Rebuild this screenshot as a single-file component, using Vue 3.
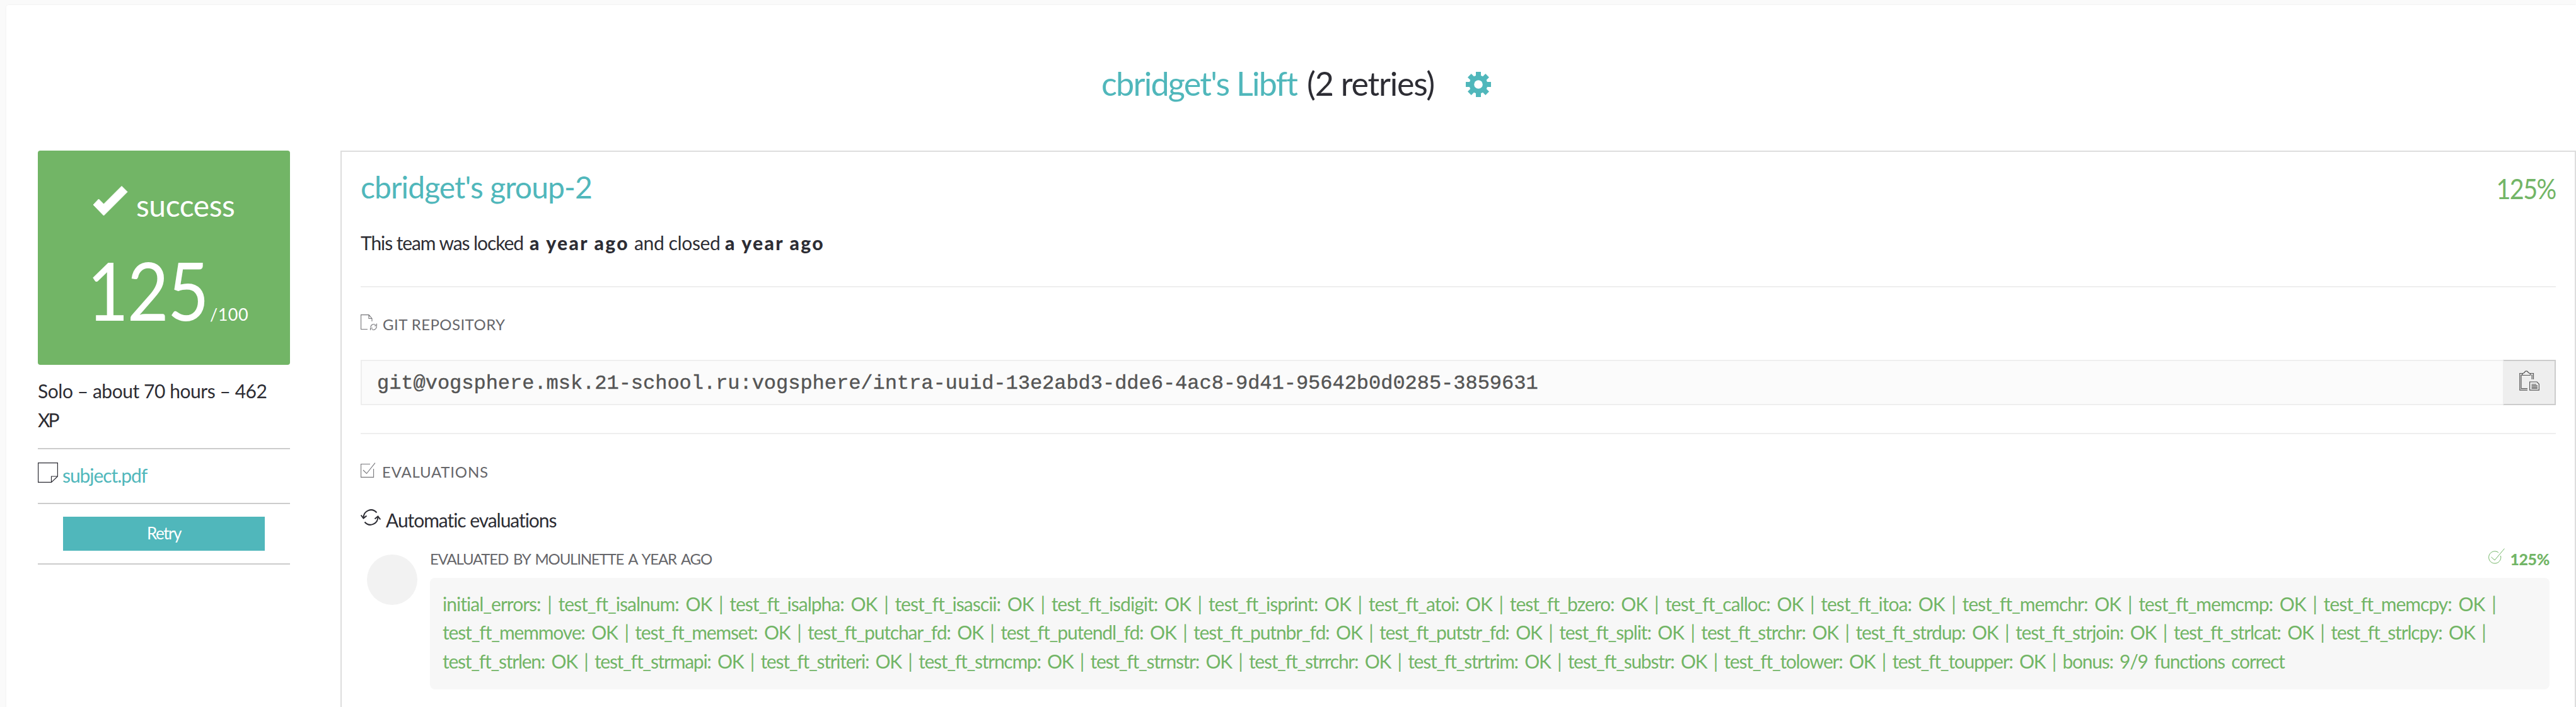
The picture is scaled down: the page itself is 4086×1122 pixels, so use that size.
<script setup>
const teeth = [0, 45, 90, 135]

const feedback = [
  {
    id: 'a',
    text: 'initial_errors: | test_ft_isalnum: OK | test_ft_isalpha: OK | test_ft_isascii: OK | test_ft_isdigit: OK | test_ft_isprint: OK | test_ft_atoi: OK | test_ft_bzero: OK | test_ft_calloc: OK | test_ft_itoa: OK | test_ft_memchr: OK | test_ft_memcmp: OK | test_ft_memcpy: OK |'
  },
  {
    id: 'b',
    text: 'test_ft_memmove: OK | test_ft_memset: OK | test_ft_putchar_fd: OK | test_ft_putendl_fd: OK | test_ft_putnbr_fd: OK | test_ft_putstr_fd: OK | test_ft_split: OK | test_ft_strchr: OK | test_ft_strdup: OK | test_ft_strjoin: OK | test_ft_strlcat: OK | test_ft_strlcpy: OK |'
  },
  {
    id: 'c',
    text: 'test_ft_strlen: OK | test_ft_strmapi: OK | test_ft_striteri: OK | test_ft_strncmp: OK | test_ft_strnstr: OK | test_ft_strrchr: OK | test_ft_strtrim: OK | test_ft_substr: OK | test_ft_tolower: OK | test_ft_toupper: OK | bonus: 9/9 functions correct'
  }
]
</script>

<template>
  <div class="page">
    <main class="sheet">
      <header class="head">
        <a class="project">cbridget's Libft</a>
        <span class="retries">(2 retries)</span>
        <svg class="gear" viewBox="0 0 40 40">
          <g fill="#50b7bb">
            <rect v-for="t in teeth" :key="t" x="16" y="0" width="8" height="40" :transform="`rotate(${t} 20 20)`" />
            <circle cx="20" cy="20" r="14.5" />
          </g>
          <circle cx="20" cy="20" r="6.8" fill="#fff" />
        </svg>
      </header>

      <div class="columns">
        <aside class="side">
          <section class="score">
            <div class="status">
              <svg class="tick" viewBox="0 0 56 48">
                <path d="M1 30 L9.5 21 L17.5 29 L46 0.5 L55 9.5 L17.5 47 Z" fill="#fff" stroke="#fff" stroke-width="1" stroke-linejoin="round" />
              </svg>
              <span class="status-text">success</span>
            </div>
            <div class="mark"><span class="big">125</span><span class="of">/100</span></div>
          </section>
          <p class="summary"><span>Solo – about 70 hours – 462</span><br /><span class="xp">XP</span></p>
          <div class="attachment">
            <svg class="note" viewBox="0 0 32 32" fill="none" stroke="#2d2d34" stroke-width="1.2">
              <path d="M.6 .6H31.4V22L21.5 31.4H.6Z M31.4 22H21.5V31.4" />
            </svg>
            <a class="pdf">subject.pdf</a>
          </div>
          <div class="action"><button class="retry">Retry</button></div>
        </aside>

        <section class="panel">
          <div class="title-row">
            <h2 class="group">cbridget's group-2</h2>
            <span class="percent">125%</span>
          </div>
          <p class="locked">
            <span class="t1">This team was locked</span><b class="t2">a year ago</b><span class="t3">and closed</span><b class="t2">a year ago</b>
          </p>
          <hr class="rule" />

          <h4 class="label git">
            <svg class="i-git" viewBox="0 0 27 26" fill="none" stroke="#77777b" stroke-width="1.1">
              <path d="M11 23.5H.6V.6H13L18 6.5V11 M13 .6V6.5H18" />
              <path d="M16 20.5C16 16 21 14 24 17 M25.5 14.5V18H22 M25.5 19C25 24 20 26 17.5 23 M15.5 25V21.8H19" />
            </svg>
            <span>GIT REPOSITORY</span>
          </h4>
          <div class="repo">
            <div class="url">git@vogsphere.msk.21-school.ru:vogsphere/intra-uuid-13e2abd3-dde6-4ac8-9d41-95642b0d0285-3859631</div>
            <button class="copy">
              <svg viewBox="0 0 32 32" fill="none" stroke="#555" stroke-width="1.2">
                <path d="M6 4.5H.8V31.2H13 M3 7V28.6H13 M17 4.5H22.5V14 M3 7H5 M19 7H20.2V14" />
                <path d="M5 7.5V5L8.5 3C9 .2 13.5 .2 14 3L17.5 5V7.5Z" />
                <path d="M16.6 18H28L31.4 21.5V31.2H16.6Z M19.5 22H27 M19.5 24.2H29 M19.5 26.3H29 M19.5 28.3H29" />
              </svg>
            </button>
          </div>
          <hr class="rule second" />

          <h4 class="label evals">
            <svg class="i-eval" viewBox="0 0 24 24" fill="none" stroke="#77777b" stroke-width="1.1">
              <path d="M15 2.5H.6V23.4H20.6V10 M4 12L9.5 17.5L23 .6" />
            </svg>
            <span>EVALUATIONS</span>
          </h4>
          <div class="auto">
            <svg class="i-sync" viewBox="0 0 32 26" fill="none" stroke="#2d2d34" stroke-width="2">
              <path d="M4.5 14C4.5 2 18 -3 25.5 5.5 M27.5 12C27.5 24 14 29 6.5 20.5" />
              <path d="M.6 9.5L4.5 14.5L9.5 10.5 M22.5 15.5L27.5 11.5L31.4 16.5" />
            </svg>
            <span>Automatic evaluations</span>
          </div>

          <article class="evaluation">
            <div class="avatar"></div>
            <div class="body">
              <div class="meta">
                <span class="by">EVALUATED BY MOULINETTE A YEAR AGO</span>
                <span class="result">
                  <svg class="i-ok" viewBox="0 0 26 26" fill="none" stroke="#72b566" stroke-width="1">
                    <path d="M16 6.8A9.6 9.6 0 1 0 19.5 12 M4.5 14L10 19L25.5 .6" />
                  </svg>
                  <b>125%</b>
                </span>
              </div>
              <div class="feedback">
                <div v-for="line in feedback" :key="line.id" :class="['line', line.id]">{{ line.text }}</div>
              </div>
            </div>
          </article>
        </section>
      </div>
    </main>
  </div>
</template>

<style>
body {
  margin: 0;
}
</style>

<style scoped>
.page {
  box-sizing: border-box;
  height: 1122px;
  overflow: hidden;
  padding: 8px 0 0 10px;
  background: #fafafa;
  color: #2d2d34;
  font-family: Lato, 'Liberation Sans', sans-serif;
  font-size: 30px;
  line-height: 46px;
  white-space: nowrap;
}
.sheet {
  height: 1200px;
  background: #fff;
  border-radius: 4px 0 0 0;
  box-shadow: 0 0 3px rgba(0, 0, 0, 0.06);
}
svg {
  display: block;
  flex: none;
}
.head {
  box-sizing: border-box;
  display: flex;
  height: 231px;
  padding: 94px 0 0 1737px;
  font-size: 52px;
  line-height: 60px;
}
.project {
  width: 326px;
  color: #50b7bb;
  letter-spacing: -1.73px;
}
.retries {
  width: 252px;
  letter-spacing: -1.2px;
}
.gear {
  width: 40px;
  height: 40px;
  margin-top: 12px;
}
.columns {
  display: flex;
}
.side {
  width: 400px;
  margin: 0 80px 0 50px;
}
.score {
  box-sizing: border-box;
  height: 340px;
  padding-top: 57px;
  border-radius: 4px;
  background: #72b566;
  color: #fff;
}
.status {
  display: flex;
  padding-left: 87px;
  font-size: 48px;
  line-height: 60px;
}
.tick {
  width: 56px;
  height: 48px;
  margin: -1px 13px 0 0;
}
.status-text {
  letter-spacing: -0.44px;
}
.mark {
  display: flex;
  align-items: baseline;
  margin-top: 49px;
  padding-left: 78px;
}
.big {
  width: 195px;
  font-size: 128px;
  line-height: 110px;
  letter-spacing: -2.5px;
  transform: scaleX(0.89);
  transform-origin: 0 0;
}
.of {
  font-size: 27px;
  line-height: 40px;
  letter-spacing: 0.5px;
}
.summary {
  margin: 18px 0 0;
  padding-bottom: 22px;
  border-bottom: 2px solid #ccc;
  letter-spacing: -0.45px;
}
.xp {
  letter-spacing: -3px;
}
.attachment {
  display: flex;
  padding: 18px 0 21px;
  border-bottom: 2px solid #ccc;
}
.note {
  width: 32px;
  height: 32px;
  margin: 3px 7px 0 0;
}
.pdf {
  color: #50b7bb;
  letter-spacing: -1.05px;
}
.action {
  padding: 20px 40px;
  border-bottom: 2px solid #ccc;
}
.retry {
  display: block;
  width: 320px;
  height: 54px;
  padding: 0 0 2px;
  border: 0;
  background: #50b7bb;
  color: #fff;
  font: 26px/52px Lato, 'Liberation Sans', sans-serif;
  letter-spacing: -1.5px;
}
.panel {
  box-sizing: border-box;
  flex: 1;
  height: 960px;
  padding: 26px 30px 0;
  border: 2px solid #ddd;
}
.title-row {
  display: flex;
  justify-content: space-between;
  height: 60px;
  line-height: 60px;
}
.group {
  margin: 0;
  color: #50b7bb;
  font-size: 48px;
  font-weight: 400;
  letter-spacing: -0.9px;
}
.percent {
  padding-top: 2px;
  color: #72b566;
  font-size: 44px;
  letter-spacing: -1.8px;
  transform: scaleX(0.9);
  transform-origin: 100% 0;
}
.locked {
  display: flex;
  margin: 35px 0 46px;
}
.t1 {
  width: 268px;
  letter-spacing: -1.08px;
}
.t2 {
  width: 166px;
  font-weight: 900;
  letter-spacing: 2.3px;
}
.t3 {
  width: 144px;
  letter-spacing: -0.38px;
}
.rule {
  height: 2px;
  margin: 0;
  border: 0;
  background: #eee;
}
.label {
  display: flex;
  margin: 0;
  color: #66666a;
  font-size: 24px;
  font-weight: 400;
  line-height: 40px;
}
.git {
  margin: 39px 0 36px;
  letter-spacing: 0.45px;
}
.i-git {
  width: 27px;
  height: 26px;
  margin: 4px 8px 0 0;
}
.repo {
  display: flex;
  height: 72px;
}
.url {
  box-sizing: border-box;
  flex: 1;
  padding-left: 24px;
  border: 2px solid #eee;
  border-right: 0;
  background: #fbfbfb;
  color: #555;
  font: 32px/72px 'Liberation Mono', monospace;
  letter-spacing: -0.02px;
  -webkit-text-stroke: 0.4px #555;
}
.copy {
  box-sizing: border-box;
  width: 84px;
  padding: 0 0 6px 24px;
  border: 2px solid #ccc;
  border-left-color: #eee;
  background: #eee;
}
.copy svg {
  width: 32px;
  height: 32px;
}
.second {
  margin-top: 44px;
}
.evals {
  margin: 40px 0 33px;
  letter-spacing: 0.8px;
}
.i-eval {
  width: 24px;
  height: 24px;
  margin: 5px 10px 0 0;
}
.auto {
  display: flex;
  letter-spacing: -1.05px;
}
.i-sync {
  width: 32px;
  height: 26px;
  margin: 6px 8px 0 0;
}
.evaluation {
  display: flex;
  margin: 19px 10px 0;
}
.avatar {
  flex: none;
  width: 80px;
  height: 80px;
  margin: 13px 20px 0 0;
  border-radius: 50%;
  background: #f2f2f2;
}
.body {
  flex: 1;
}
.meta {
  display: flex;
  justify-content: space-between;
  font-size: 24px;
  line-height: 40px;
}
.by {
  color: #66666a;
  letter-spacing: -1.2px;
  word-spacing: 3px;
}
.result {
  display: flex;
  color: #72b566;
  font-size: 25px;
}
.result b {
  font-weight: 900;
  letter-spacing: -0.4px;
}
.i-ok {
  width: 26px;
  height: 26px;
  margin: 3px 8px 0 0;
}
.feedback {
  box-sizing: border-box;
  height: 177px;
  margin-top: 10px;
  padding: 18.5px 0 0 20px;
  border-radius: 8px;
  background: #f7f7f7;
  color: #72b566;
  line-height: 45.6px;
  word-spacing: 4px;
}
.a {
  letter-spacing: -0.98px;
}
.b {
  letter-spacing: -1.14px;
}
.c {
  letter-spacing: -1.26px;
}
</style>
